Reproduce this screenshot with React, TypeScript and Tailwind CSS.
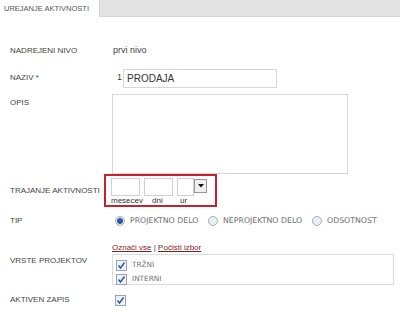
import React from "react";

const Check = () => (
  <span className="inline-flex h-[11px] w-[11px] items-center justify-center border border-[#9aa4b0] bg-[#eef1f5]">
    <svg width="9" height="9" viewBox="0 0 9 9">
      <path d="M1.5 4.5 L3.5 7 L7.5 1.5" fill="none" stroke="#2d56a8" strokeWidth="1.4" />
    </svg>
  </span>
);

const Radio = ({ on }: { on?: boolean }) => (
  <span className="inline-flex h-[10px] w-[10px] items-center justify-center rounded-full border border-[#a9b0b8] bg-[#eceff2]">
    {on && <span className="h-[6px] w-[6px] rounded-full bg-[#2a5aa8]" />}
  </span>
);

export default function App() {
  const label = "text-[8px] text-[#444] tracking-[0px] [font-family:'Liberation_Sans',Arial,sans-serif]";
  const verd = "[font-family:'DejaVu_Sans',Verdana,sans-serif]";
  return (
    <div className="w-[400px] h-[320px] bg-white overflow-hidden [font-family:'Liberation_Sans',Arial,sans-serif]">
      <div className="flex h-[17px] bg-[#e3e3e3] border-b border-[#d5d5d5]">
        <div className="flex w-[100px] h-[17px] items-center bg-white pl-[4px] border-r border-[#d5d5d5] text-[7.5px] text-[#555]">
          UREJANJE AKTIVNOSTI
        </div>
      </div>

      <div className="pl-[10px]">
        {/* NADREJENI NIVO */}
        <div className="flex items-center h-[14px] mt-[27px]">
          <div className={`w-[103px] ${label}`}>NADREJENI NIVO</div>
          <div className="text-[9px] text-[#444]">prvi nivo</div>
        </div>

        {/* NAZIV */}
        <div className="flex items-center h-[20px] mt-[10px]">
          <div className={`w-[107px] ${label}`}>NAZIV *</div>
          <div className="text-[9px] text-[#444] w-[6px]">1</div>
          <div className="flex items-center w-[154px] h-[19px] border border-[#d6d6d6] pl-[3px] text-[10px] text-[#333]">
            PRODAJA
          </div>
        </div>

        {/* OPIS */}
        <div className="flex mt-[6px]">
          <div className={`w-[102px] pt-[3px] ${label}`}>OPIS</div>
          <div className="w-[236px] h-[80px] border border-[#d6d6d6]" />
        </div>

        {/* TRAJANJE */}
        <div className="flex items-center">
          <div className={`w-[94px] ${label}`}>TRAJANJE AKTIVNOSTI</div>
          <div className="w-[113px] h-[33px] border-2 border-[#c8202f] pl-[5px] pt-[2px]">
            <div className="flex gap-[4px]">
              <div className="w-[29px] h-[18px] border border-[#cfcfcf]" />
              <div className="w-[29px] h-[18px] border border-[#cfcfcf]" />
              <div className="flex">
                <div className="w-[17px] h-[18px] border border-[#cfcfcf]" />
                <div className="flex w-[13px] h-[14px] items-center justify-center border border-[#999] bg-[#f0f0f0] mt-[1px]">
                  <svg width="6" height="4" viewBox="0 0 6 4"><path d="M0 0 L6 0 L3 3.5 Z" fill="#111" /></svg>
                </div>
              </div>
            </div>
            <div className="flex text-[8px] text-[#333] leading-[10px]">
              <span className="w-[41px]">mesecev</span>
              <span className="w-[28px]">dni</span>
              <span>ur</span>
            </div>
          </div>
        </div>

        {/* TIP */}
        <div className="flex items-center h-[14px] mt-[7px]">
          <div className={`w-[105px] ${label}`}>TIP</div>
          <div className={`flex items-center text-[7.8px] text-[#707070] ${verd}`}>
            <Radio on />
            <span className="ml-[5px] w-[78px]">PROJEKTNO DELO</span>
            <Radio />
            <span className="ml-[5px] w-[89px]">NEPROJEKTNO DELO</span>
            <Radio />
            <span className="ml-[5px]">ODSOTNOST</span>
          </div>
        </div>

        {/* VRSTE PROJEKTOV */}
        <div className="flex mt-[15px]">
          <div className={`w-[102px] pt-[12px] ${label}`}>VRSTE PROJEKTOV</div>
          <div>
            <div className="text-[8px] leading-[10px] text-[#444]">
              <span className="text-[#8b1c1c] underline">Označi vse</span>
              <span> | </span>
              <span className="text-[#8b1c1c] underline">Počisti izbor</span>
            </div>
            <div className={`w-[282px] h-[31px] border border-[#dcdcdc] mt-[1px] pl-[3px] pt-[3px] text-[7.3px] text-[#707070] ${verd}`}>
              <div className="flex items-center gap-[5px] h-[14px]"><Check /><span>TRŽNI</span></div>
              <div className="flex items-center gap-[5px] h-[14px]"><Check /><span>INTERNI</span></div>
            </div>
          </div>
        </div>

        {/* AKTIVEN ZAPIS */}
        <div className="flex items-center h-[12px] mt-[9px]">
          <div className={`w-[105px] ${label}`}>AKTIVEN ZAPIS</div>
          <Check />
        </div>
      </div>
    </div>
  );
}
